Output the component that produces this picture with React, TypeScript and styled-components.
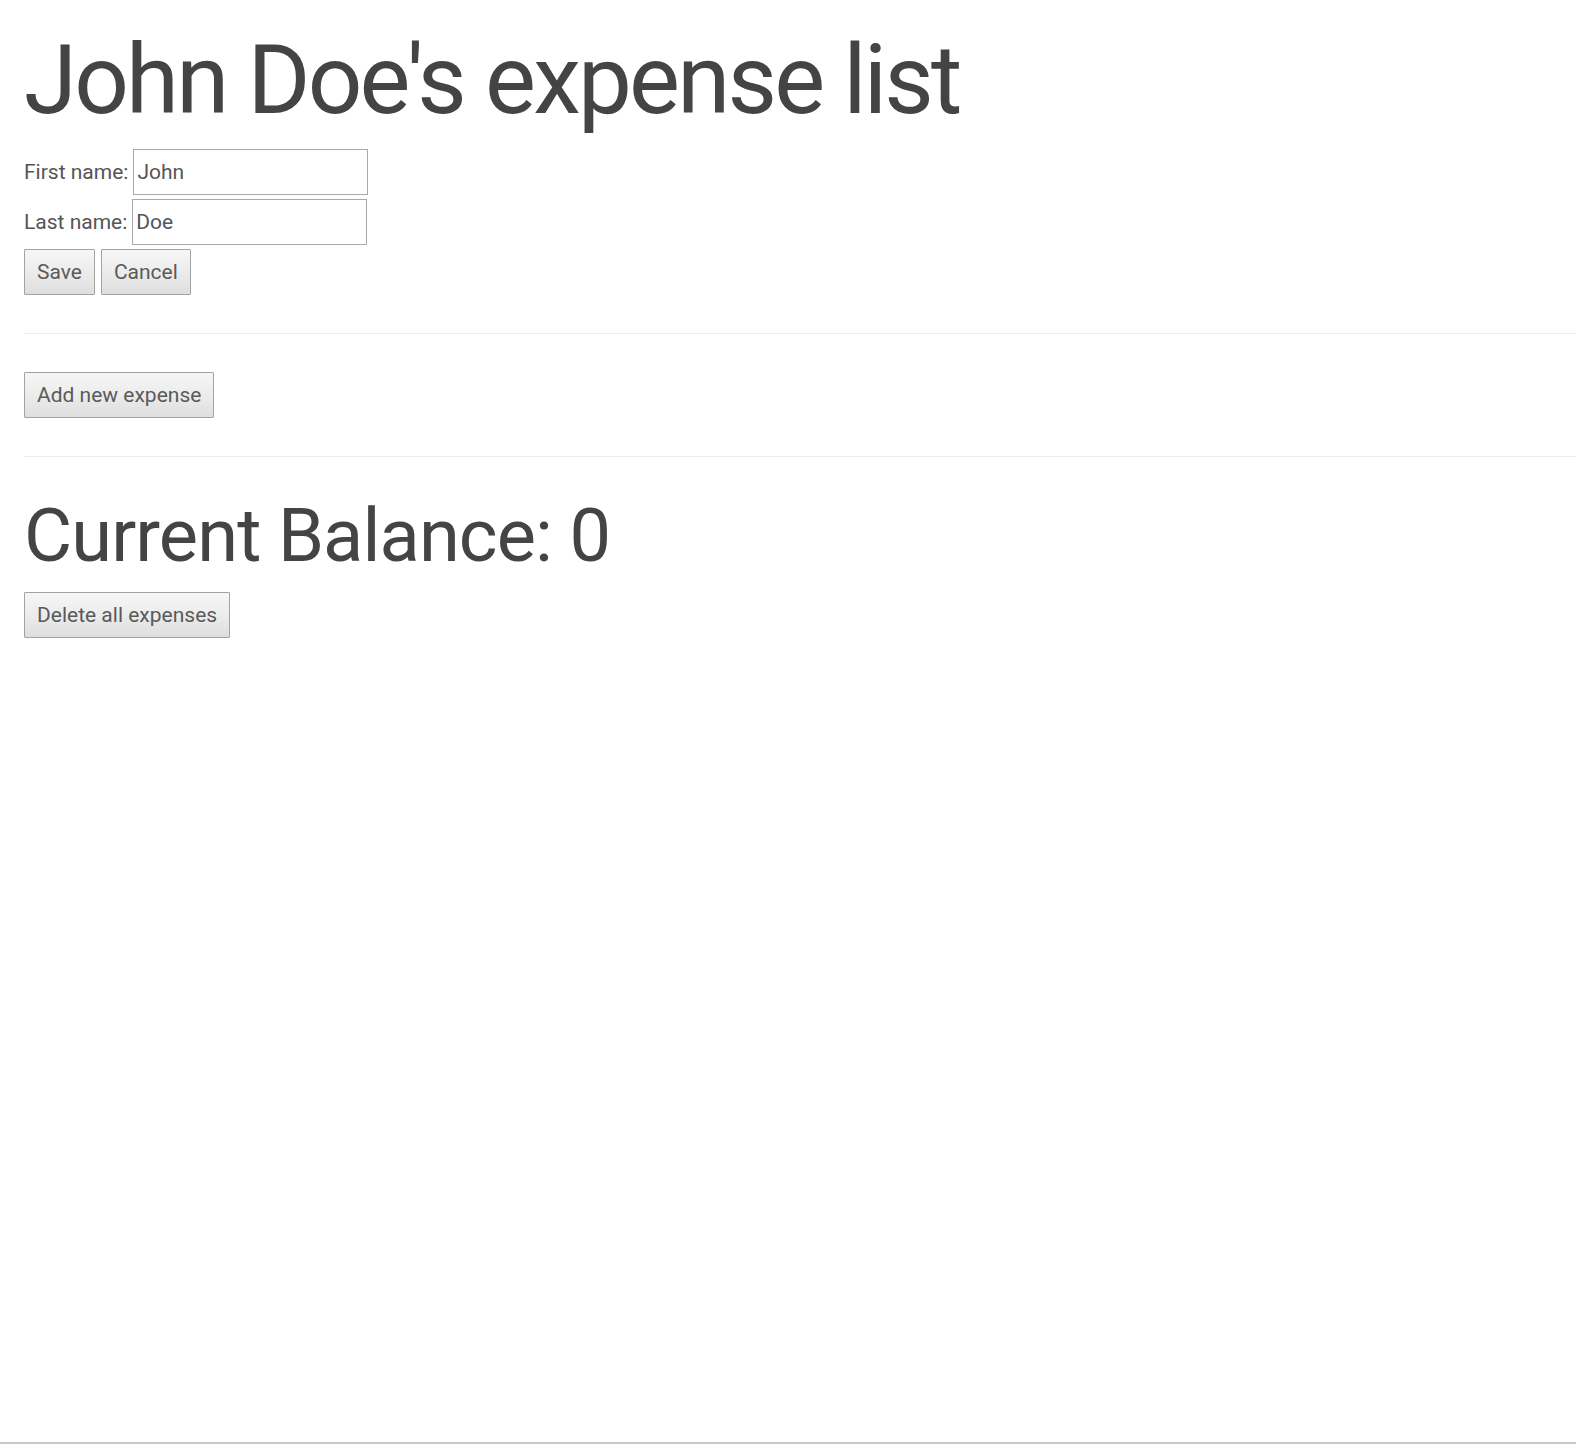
import React, { useState } from "react";
import styled, { createGlobalStyle } from "styled-components";

const GlobalStyle = createGlobalStyle`
  html, body {
    margin: 0;
    padding: 0;
    background: #ffffff;
  }
  body {
    font-family: Roboto, "Liberation Sans", Arial, sans-serif;
    color: #555555;
  }
  * { box-sizing: border-box; }
`;

const Page = styled.div`
  min-height: 1444px;
  padding: 24px 0 0 24px;
  border-bottom: 2px solid #c8c8c8;
`;

const Title = styled.h1`
  margin: 0 0 13px 0;
  font-family: Roboto, "Liberation Sans", Arial, sans-serif;
  font-size: 96px;
  font-weight: 400;
  letter-spacing: -2.8px;
  line-height: normal;
  color: #444444;
`;

const SubTitle = styled.h2`
  margin: 0 0 13px 0;
  font-family: Roboto, "Liberation Sans", Arial, sans-serif;
  font-size: 74px;
  font-weight: 400;
  letter-spacing: -0.9px;
  line-height: normal;
  color: #444444;
`;

const Form = styled.div`
  display: flex;
  flex-direction: column;
  gap: 4px;
`;

const Field = styled.label`
  display: flex;
  align-items: center;
  gap: 5px;
  font-size: 21px;
  color: #555555;
`;

const TextInput = styled.input`
  width: 235px;
  height: 46px;
  padding: 0 3px;
  border: 1px solid #a9a9a9;
  border-radius: 0;
  font-family: Roboto, "Liberation Sans", Arial, sans-serif;
  font-size: 21px;
  color: #555555;
  outline: none;
  background: #ffffff;
`;

const ButtonRow = styled.div`
  display: flex;
  gap: 6px;
`;

const Button = styled.button`
  height: 46px;
  padding: 0 12px;
  border: 1px solid #a3a3a3;
  border-radius: 1px;
  background: linear-gradient(to bottom, #f6f6f6 0%, #ececec 50%, #dedede 100%);
  font-family: Roboto, "Liberation Sans", Arial, sans-serif;
  font-size: 21px;
  color: #5a5a5a;
  cursor: pointer;
`;

const Divider = styled.hr<{ $below?: number }>`
  margin: 38px 0 ${(p) => p.$below ?? 38}px 0;
  border: 0;
  border-top: 1px solid #ececec;
  height: 0;
`;

const Section = styled.div`
  display: flex;
`;

export default function App() {
  const [first, setFirst] = useState("John");
  const [last, setLast] = useState("Doe");
  return (
    <>
      <GlobalStyle />
      <Page>
        <Title>{first} {last}'s expense list</Title>
        <Form>
          <Field>
            First name:
            <TextInput value={first} onChange={(e) => setFirst(e.target.value)} />
          </Field>
          <Field>
            Last name:
            <TextInput value={last} onChange={(e) => setLast(e.target.value)} />
          </Field>
          <ButtonRow>
            <Button>Save</Button>
            <Button>Cancel</Button>
          </ButtonRow>
        </Form>
        <Divider />
        <Section>
          <Button>Add new expense</Button>
        </Section>
        <Divider $below={35} />
        <SubTitle>Current Balance: 0</SubTitle>
        <Section>
          <Button>Delete all expenses</Button>
        </Section>
      </Page>
    </>
  );
}
